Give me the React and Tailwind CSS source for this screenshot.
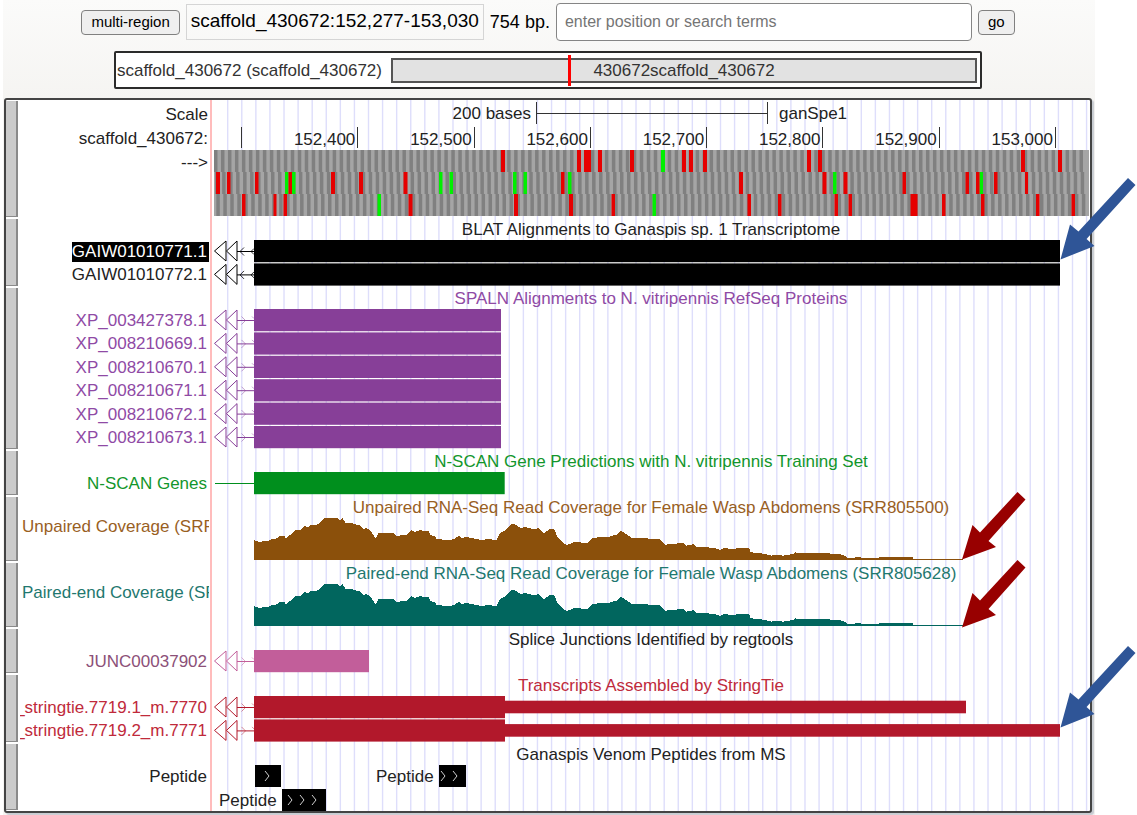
import React from 'react';

const PLOT_WIDTH = 878;

// Ruler
const POSITIONS = ['152,400', '152,500', '152,600', '152,700', '152,800', '152,900', '153,000'];

// Start / stop codons for each reading frame, as [x, width]
const FRAMES = [
  {
    shift: 0,
    stops: [[289, 4], [365, 4], [372, 7], [386, 4], [418, 4], [470, 4], [477, 4], [491, 4], [595, 4], [606, 4], [809, 4], [846, 4]],
    starts: [[449, 4]],
  },
  {
    shift: 1,
    stops: [[4, 4], [15, 3.5], [43, 3.5], [76.5, 3.5], [119, 4], [147, 4], [191.5, 4], [349, 3.5], [527, 4], [610.5, 4], [631.5, 4], [690.5, 3.5], [753.5, 3.5], [764, 3.5], [782, 3.5], [813, 3]],
    starts: [[73, 3.5], [80, 3.5], [227, 3.5], [237.5, 3.5], [301, 3.5], [311.5, 3.5], [356, 3.5], [621, 3.5], [767.5, 3.5]],
  },
  {
    shift: 2,
    stops: [[30, 3.5], [61.5, 3], [71.5, 3.5], [196.5, 4], [302, 4], [357, 4], [399.5, 3.5], [535.5, 3.5], [566, 3.5], [622.5, 3.5], [636.5, 3.5], [698.5, 7], [730, 3.5], [769, 3.5], [824, 3.5], [859.5, 3.5]],
    starts: [[165.5, 3.5], [440.5, 3.5]],
  },
];

// Read depth outline, in thirds of a pixel
const COVERAGE = [
  [126, 66], [131, 70], [144, 71], [169, 69], [179, 63], [196, 61], [202, 53], [216, 53], [222, 62], [234, 51],
  [249, 37], [264, 37], [276, 24], [289, 28], [296, 22], [319, 19], [329, 8], [339, -1], [374, -1], [384, 8],
  [392, 1], [402, 16], [414, 14], [434, 20], [444, 22], [454, 34], [464, 30], [474, 36], [484, 51], [490, 62],
  [499, 46], [544, 44], [554, 56], [564, 52], [584, 51], [597, 36], [609, 42], [624, 37], [649, 39], [656, 51],
  [669, 56], [674, 63], [714, 67], [729, 61], [741, 54], [749, 60], [764, 57], [784, 61], [809, 66], [829, 63],
  [854, 66], [864, 46], [884, 34], [899, 16], [909, 19], [924, 29], [944, 28], [964, 33], [979, 31], [994, 46],
  [1014, 33], [1026, 34], [1039, 61], [1049, 71], [1064, 82], [1084, 73], [1129, 74], [1139, 62], [1164, 57],
  [1184, 58], [1214, 50], [1227, 39], [1239, 46], [1259, 60], [1294, 60], [1329, 64], [1342, 62], [1359, 80],
  [1399, 76], [1414, 74], [1424, 83], [1444, 79], [1454, 88], [1484, 88], [1509, 90], [1524, 96], [1539, 89],
  [1559, 94], [1576, 91], [1612, 91], [1616, 103], [1649, 106], [1679, 113], [1694, 110], [1714, 113], [1744, 108],
  [1750, 101], [1754, 105], [1804, 104], [1884, 108], [1904, 116], [1906, 121], [1926, 121], [1929, 118],
  [1946, 118], [1948, 121], [1999, 121], [2004, 117], [2102, 118], [2104, 122], [2254, 122],
];

const Plot = ({ height, children }) => (
  <svg
    className="block w-full overflow-visible"
    height={height}
    viewBox={`0 0 ${PLOT_WIDTH} ${height}`}
    preserveAspectRatio="none"
    aria-hidden="true"
  >
    {children}
  </svg>
);

const GuideLines = () => (
  <svg className="h-full w-full" viewBox={`0 0 ${PLOT_WIDTH} 100`} preserveAspectRatio="none" aria-hidden="true">
    {Array.from({ length: 62 }, (_, i) => (
      <rect key={i} x={15 + i * 14.08} y="0" width="1.4" height="100" fill="#dedefb" />
    ))}
  </svg>
);

// Double open triangle and the intron line that leads to the first exon
const Continuation = ({ y, color, back }) => (
  <g fill="none" stroke={color}>
    <path d={`M2.5 ${y + 11}L14 ${y + 1}V${y + 21}ZM14.5 ${y + 11}L25 ${y + 1}V${y + 21}Z`} fill="#fff" />
    <path d={`M25 ${y + 11.5}H42`} />
    {back ? (
      <path d={`M32 ${y + 7.5}L28 ${y + 11.5}L32 ${y + 15.5}M42 ${y + 8.5}L39 ${y + 11.5}L42 ${y + 14.5}`} strokeWidth="0.8" />
    ) : (
      <path d={`M29.5 ${y + 7.5}L33.5 ${y + 11.5}L29.5 ${y + 15.5}M40 ${y + 7.5}L42 ${y + 9.5}`} strokeWidth="0.7" strokeOpacity="0.7" />
    )}
  </g>
);

const Genes = ({ height, color, rows, back }) => (
  <Plot height={height}>
    {rows.map((row, i) => {
      const y = i * 23.4;
      return (
        <g key={i}>
          <Continuation y={y} color={color} back={back} />
          <rect x="42" y={y} width={row.thick - 42} height="22.2" fill={color} />
          {row.thin && <rect x={row.thick} y={y + 4.7} width={row.thin - row.thick} height="12.6" fill={color} />}
        </g>
      );
    })}
  </Plot>
);

const Coverage = ({ color }) => (
  <svg
    className="block w-full overflow-visible"
    height="44"
    viewBox={`0 0 ${PLOT_WIDTH * 3} 132`}
    preserveAspectRatio="none"
    aria-hidden="true"
  >
    <path d={`M126 125L${COVERAGE.map((p) => p.join(' ')).join('L')}V125Z`} fill={color} shapeRendering="crispEdges" />
  </svg>
);

const BigArrow = ({ className }) => (
  <svg className={`absolute ${className}`} width="76" height="83" viewBox="0 0 76 83" fill="#2f5597" aria-hidden="true">
    <path d="M0.5 81.5L10 46.5L18.5 53.5L68 0L75.5 7L26.5 61L34.5 68Z" />
  </svg>
);

const SmallArrow = ({ className }) => (
  <svg className={`absolute ${className}`} width="64" height="68" viewBox="0 0 64 68" fill="#980000" aria-hidden="true">
    <path d="M0 67.5L10.5 33L18 40.5L55.5 0L63.5 7.5L26.5 49L34 55Z" />
  </svg>
);

const Peptide = ({ className, count }) => (
  <svg className={`shrink-0 bg-black ${className}`} height="22" fill="none" stroke="#d0d0d0" aria-hidden="true">
    {Array.from({ length: count }, (_, i) => (
      <path key={i} d={`M${(count === 2 ? 2 : count === 3 ? 6 : 10) + i * 12} 6l4 5l-4 5`} />
    ))}
  </svg>
);

const Handle = () => (
  <div className="w-[12px] shrink-0 py-px">
    <div className="h-full border-r-2 border-b border-[#8a8a8a] bg-[#cbcbcb]"></div>
  </div>
);

const Track = ({ title, color, labels, alignLeft, children }) => (
  <section className={`relative flex ${color}`}>
    <Handle />
    <div className="flex w-[194px] shrink-0 flex-col border-r-2 border-[#ffbcbc] pt-[22px] pr-px pl-[2px]">
      {labels.map((label) => (
        <div
          key={label.text}
          className={`flex max-h-6 flex-1 items-center overflow-hidden whitespace-nowrap ${alignLeft ? 'mt-[-3px] pl-[2px]' : 'justify-end'}`}
        >
          <span className={label.marked ? 'bg-black pr-[2px] leading-[20px] text-white' : 'pr-[2px] leading-[20px]'}>{label.text}</span>
        </div>
      ))}
    </div>
    <div className="relative min-w-0 flex-1">
      <h2 className="h-[22px] text-center leading-[24px]">{title}</h2>
      {children}
    </div>
  </section>
);

const BaseTrack = () => (
  <section className="relative flex text-[#222]">
    <Handle />
    <div className="flex w-[194px] shrink-0 flex-col border-r-2 border-[#ffbcbc] pt-[2px] pr-[2px] text-right">
      <div className="h-6 leading-[26px]">Scale</div>
      <div className="h-6 leading-[26px]">scaffold_430672:</div>
      <div className="h-6 leading-[26px]">---&gt;</div>
    </div>
    <div className="min-w-0 flex-1 pt-[2px]">
      <div className="grid h-[25px] grid-cols-[324fr_232fr_322fr]">
        <div className="pr-[5px] text-right leading-[24px]">200 bases</div>
        <div className="flex h-[22px] items-center border-x border-[#333]">
          <div className="h-px w-full bg-[#333]"></div>
        </div>
        <div className="pl-[11px] leading-[24px]">ganSpe1</div>
      </div>
      <div className="grid h-[23px] grid-cols-[30fr_repeat(7,116fr)_34fr]">
        <div className="h-[21px] border-r border-[#333]"></div>
        {POSITIONS.map((position) => (
          <div key={position} className="h-[21px] border-r border-[#333] pr-[2px] text-right leading-[26px]">
            {position}
          </div>
        ))}
      </div>
      <Plot height={68}>
        {FRAMES.map((frame, i) => (
          <g key={i}>
            <rect x="2" y={i * 22} width="875" height="22" fill="#a5a5a5" />
            {Array.from({ length: 125 }, (_, n) => (
              <rect key={n} x={2 + frame.shift * 1.16 + n * 6.98} y={i * 22} width="3.49" height="22" fill="#808080" />
            ))}
            {frame.starts.map(([x, w]) => (
              <rect key={x} x={x} y={i * 22} width={w} height="22" fill="#00f000" />
            ))}
            {frame.stops.map(([x, w]) => (
              <rect key={x} x={x} y={i * 22} width={w} height="22" fill="#e60000" />
            ))}
          </g>
        ))}
      </Plot>
    </div>
  </section>
);

const PositionBar = () => (
  <form className="flex items-center justify-center gap-[6px] pt-[3px]" onSubmit={(e) => e.preventDefault()}>
    <button type="button" className="h-[25px] rounded-[4px] border border-[#808080] bg-[#efefef] px-[9px] text-[15px] leading-[20px]">
      multi-region
    </button>
    <div className="h-[36px] border border-[#d5d5d5] px-1 text-[19px] leading-[32px]">scaffold_430672:152,277-153,030</div>
    <div className="text-lg">754 bp.</div>
    <input
      type="text"
      aria-label="Position or search terms"
      placeholder="enter position or search terms"
      className="h-[38px] w-[416px] rounded-[4px] border border-[#858585] bg-white px-2 text-base placeholder:text-[#757575]"
    />
    <button type="submit" className="h-[25px] rounded-[4px] border border-[#808080] bg-[#efefef] px-[9px] text-[15px] leading-[20px]">
      go
    </button>
  </form>
);

const Ideogram = () => (
  <div className="mx-auto mt-[10px] flex h-[38px] w-[868px] items-center rounded-[2px] border-2 border-[#2b2b2b] bg-white pr-[3px] pl-px leading-[22px] text-[#333]">
    <div className="w-[274px] shrink-0 pt-[2px]">scaffold_430672 (scaffold_430672)</div>
    <div className="relative flex h-[25px] flex-1 items-center justify-center border-2 border-[#555] bg-[#e2e2e2]">
      <span className="pt-[2px]">430672scaffold_430672</span>
      <div className="absolute top-[-5px] left-[30%] h-[31px] w-[3px] bg-[#ff0000]"></div>
    </div>
  </div>
);

const PROTEINS = [
  'XP_003427378.1',
  'XP_008210669.1',
  'XP_008210670.1',
  'XP_008210671.1',
  'XP_008210672.1',
  'XP_008210673.1',
];

export default function App() {
  return (
    <div className="min-h-screen overflow-hidden bg-white pr-[42px] pl-[3px] font-['Liberation_Sans',Arial,sans-serif] text-[17px] text-black">
      <main className="bg-linear-to-b from-[#fbfbfa] to-[#f5f4f2] to-[100px] pr-[3px] pl-px pb-[3px]">
        <PositionBar />
        <Ideogram />
        <div className="relative mt-[9px] rounded-[3px] border-2 border-[#444] bg-white shadow-[2px_2px_1px_#c8ccd2]">
          <div className="absolute inset-y-0 right-0 left-[206px]">
            <GuideLines />
          </div>
          <BaseTrack />
          <Track
            title="BLAT Alignments to Ganaspis sp. 1 Transcriptome"
            color="text-[#222]"
            labels={[{ text: 'GAIW01010771.1', marked: true }, { text: 'GAIW01010772.1' }]}
          >
            <Genes height={47} color="#000" rows={[{ thick: 848 }, { thick: 848 }]} back />
            <BigArrow className="top-[-40px] right-[-46px]" />
          </Track>
          <Track
            title="SPALN Alignments to N. vitripennis RefSeq Proteins"
            color="text-[#8f4aa5]"
            labels={PROTEINS.map((text) => ({ text }))}
          >
            <Genes height={141} color="#873f98" rows={PROTEINS.map(() => ({ thick: 289 }))} />
          </Track>
          <Track
            title="N-SCAN Gene Predictions with N. vitripennis Training Set"
            color="text-[#12962b]"
            labels={[{ text: 'N-SCAN Genes' }]}
          >
            <Plot height={24}>
              <path d="M3 11.5H42" stroke="#008f1d" />
              <rect x="42" y="0" width="250.7" height="22.2" fill="#008f1d" />
            </Plot>
          </Track>
          <Track
            title="Unpaired RNA-Seq Read Coverage for Female Wasp Abdomens (SRR805500)"
            color="text-[#99601f]"
            labels={[{ text: 'Unpaired Coverage (SRR' }]}
            alignLeft
          >
            <Coverage color="#8b500b" />
            <SmallArrow className="top-[-4px] right-[64px]" />
          </Track>
          <Track
            title="Paired-end RNA-Seq Read Coverage for Female Wasp Abdomens (SRR805628)"
            color="text-[#1f786f]"
            labels={[{ text: 'Paired-end Coverage (SR' }]}
            alignLeft
          >
            <Coverage color="#01665e" />
            <SmallArrow className="top-[-2px] right-[64px]" />
          </Track>
          <Track
            title={<span className="text-[#222]">Splice Junctions Identified by regtools</span>}
            color="text-[#8c5078]"
            labels={[{ text: 'JUNC00037902' }]}
          >
            <Genes height={24} color="#c25e9a" rows={[{ thick: 157 }]} />
          </Track>
          <Track
            title="Transcripts Assembled by StringTie"
            color="text-[#c02a3b]"
            labels={[{ text: '_stringtie.7719.1_m.7770' }, { text: '_stringtie.7719.2_m.7771' }]}
          >
            <Genes height={47} color="#b2182b" rows={[{ thick: 293, thin: 754 }, { thick: 293, thin: 848 }]} />
            <BigArrow className="top-[-28px] right-[-46px]" />
          </Track>
          <Track title="Ganaspis Venom Peptides from MS" color="text-[#222]" labels={[{ text: 'Peptide' }]}>
            <div className="flex h-6 items-start pl-[43px] leading-[23px]">
              <Peptide className="w-[26px]" count={1} />
              <span className="ml-[95px] w-[63px]">Peptide</span>
              <Peptide className="w-[27px]" count={2} />
            </div>
            <div className="flex h-[22px] items-start pl-[7px] leading-[23px]">
              <span className="w-[63px]">Peptide</span>
              <Peptide className="w-[44px]" count={3} />
            </div>
          </Track>
        </div>
      </main>
    </div>
  );
}
